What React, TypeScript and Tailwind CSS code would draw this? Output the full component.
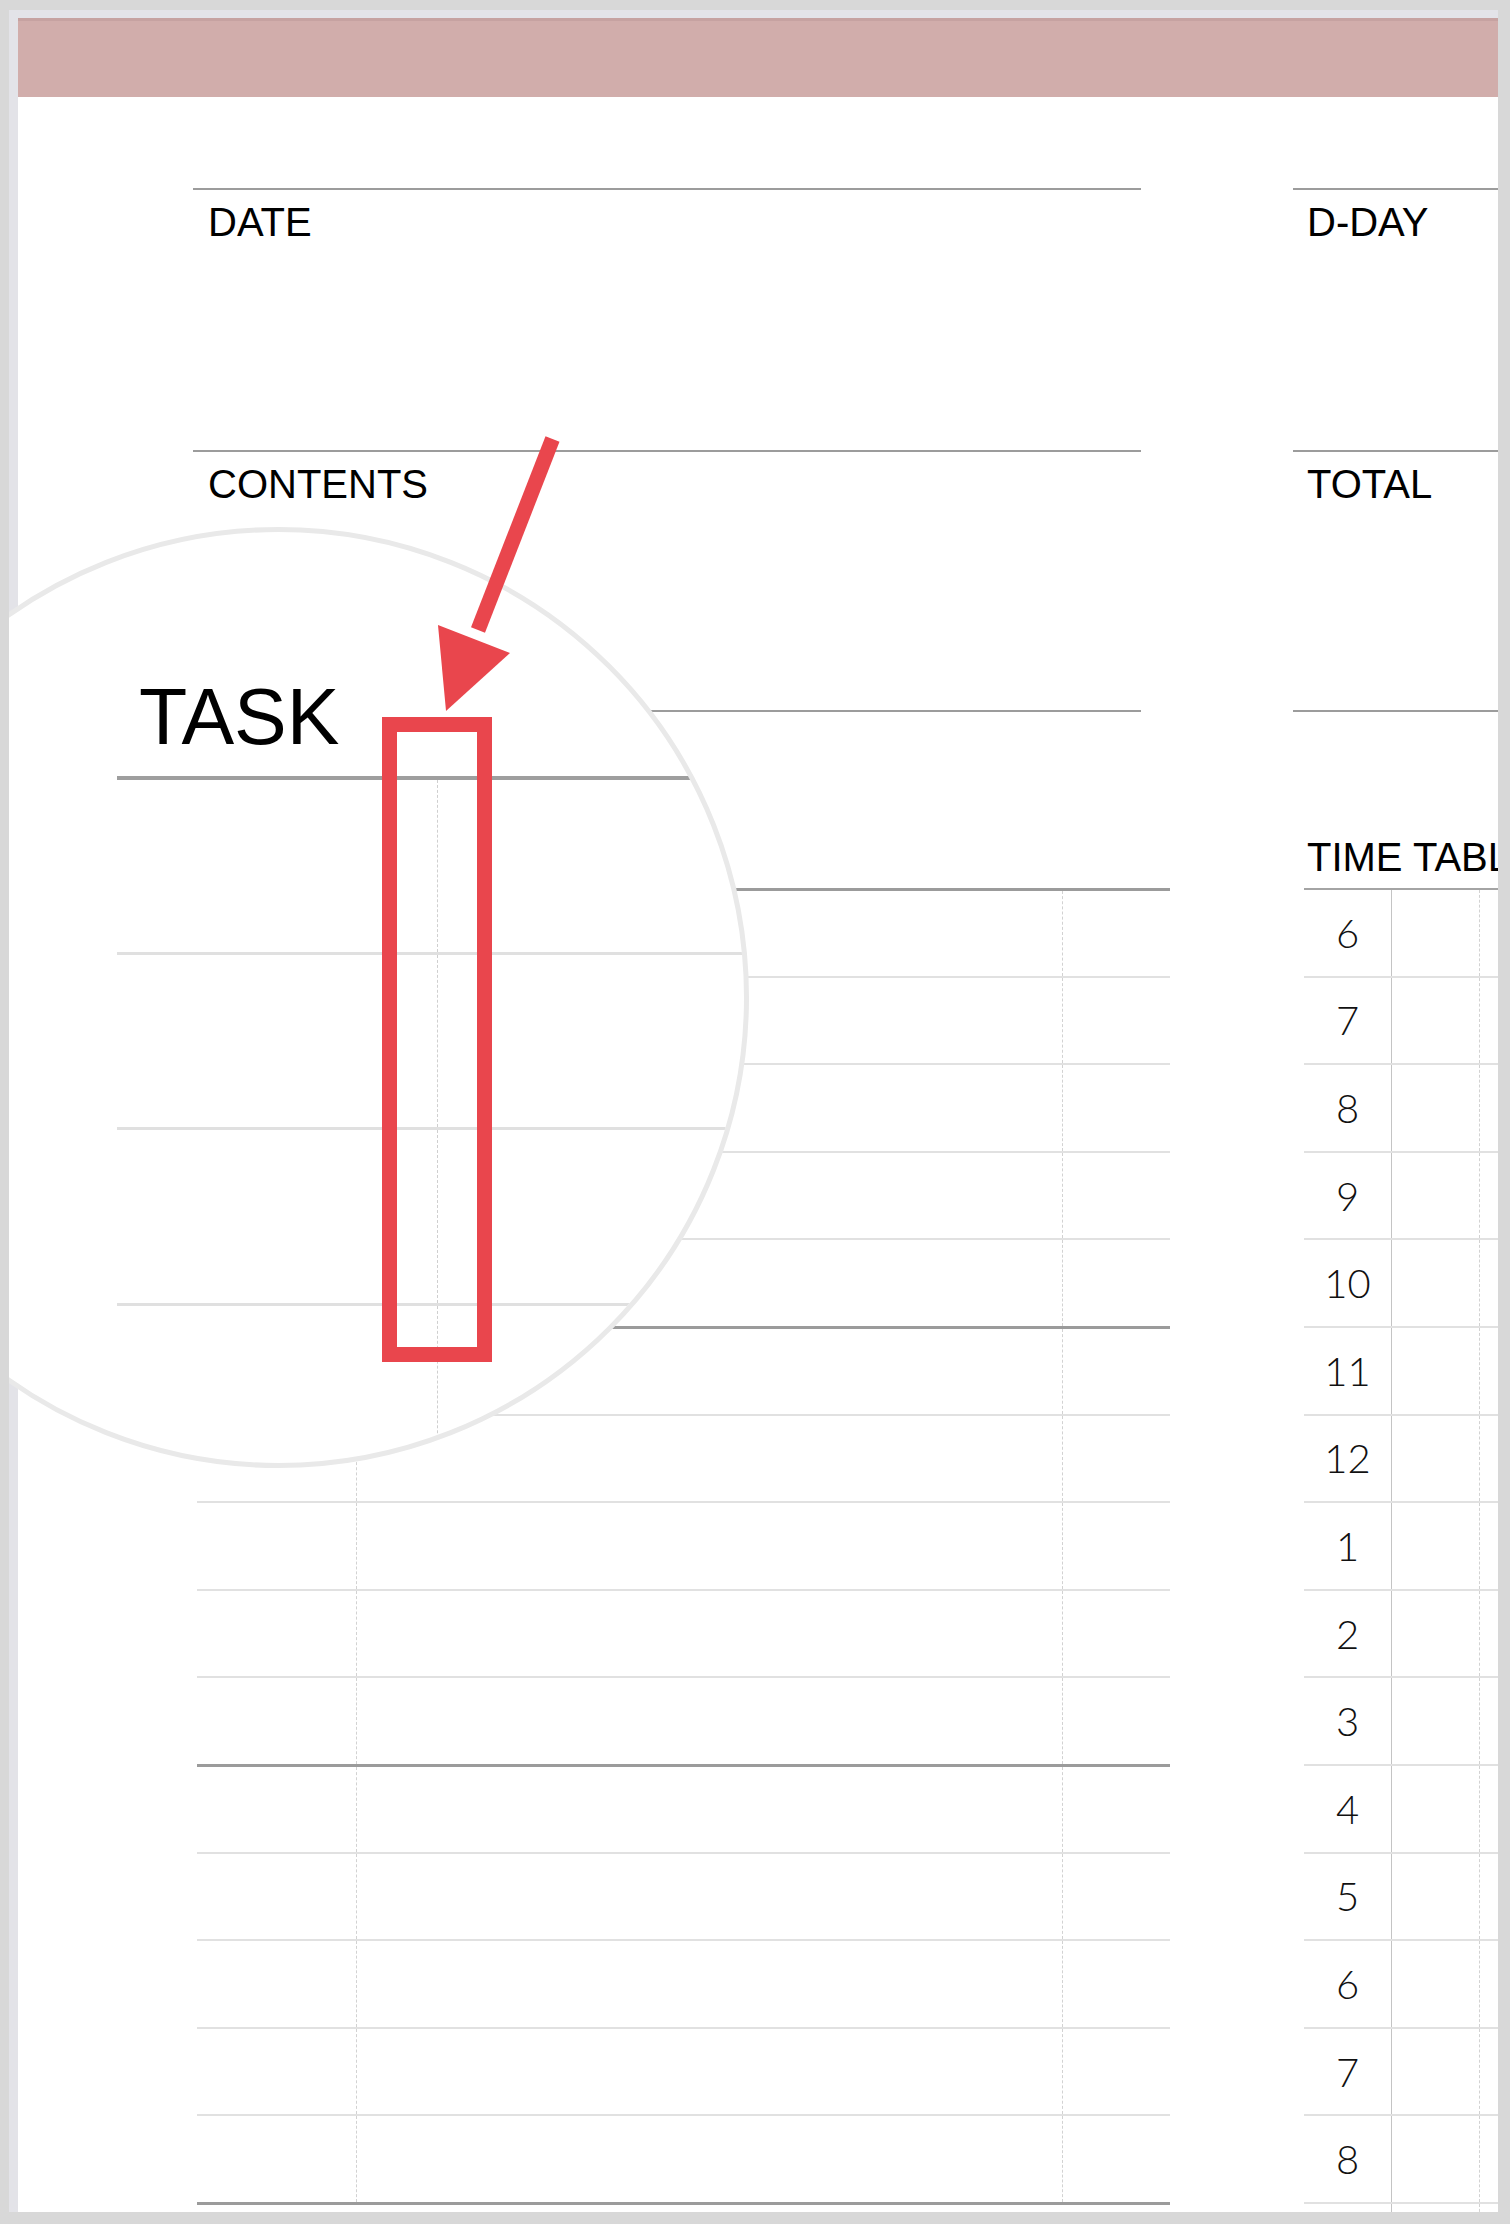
import React from "react";

const LABEL = "font-['Liberation_Sans',Arial,sans-serif] text-[40px] leading-none text-black";

function HeaderCol({ top, bottom, ml, w, pl }: { top: string; bottom: string; ml: string; w: string; pl: string }) {
  return (
    <div className={`${ml} ${w} shrink-0 flex flex-col`}>
      <div className={`h-[262px] border-t-2 border-[#9c9c9c] pt-[12px] ${pl}`}>
        <div className={LABEL}>{top}</div>
      </div>
      <div className={`h-[262px] border-t-2 border-b-2 border-[#9c9c9c] pt-[12px] ${pl}`}>
        <div className={LABEL}>{bottom}</div>
      </div>
    </div>
  );
}

const leftRows = Array.from({ length: 15 }, (_, i) => i);
const hours = ["6", "7", "8", "9", "10", "11", "12", "1", "2", "3", "4", "5", "6", "7", "8", ""];

export default function App() {
  return (
    <div className="relative w-[1510px] h-[2224px] bg-[#d8d8d8] pl-[9px] pt-[10px] overflow-hidden">
      <div className="relative w-[1489px] h-[2202px] bg-[#e3e3e8] pl-[9px] pt-[8px] overflow-hidden">
        {/* sheet */}
        <div className="w-[1480px] h-[2194px] bg-white overflow-hidden flex flex-col">
          <div className="h-[79px] shrink-0 bg-[#d1adab] border-t-[3px] border-[#c6a2a1]" />

          {/* header boxes */}
          <div className="mt-[91px] flex">
            <HeaderCol top="DATE" bottom="CONTENTS" ml="ml-[175px]" w="w-[948px]" pl="pl-[15px]" />
            <HeaderCol top="D-DAY" bottom="TOTAL" ml="ml-[152px]" w="w-[400px]" pl="pl-[14px]" />
          </div>

          {/* tables */}
          <div className="mt-[125px] flex">
            {/* task table */}
            <div className="ml-[179px] w-[973px] shrink-0 flex flex-col">
              <div className="h-[40px] pl-[11px] font-['Liberation_Sans',Arial,sans-serif] text-[39px] leading-none text-black">TASK</div>
              <div className="mt-[11px] border-b-[3px] border-[#9b9b9b]">
                {leftRows.map((i) => (
                  <div
                    key={i}
                    className={`h-[87.6px] flex ${i % 5 === 0 ? "border-t-[3px] border-[#9b9b9b]" : "border-t-2 border-[#e1e1e1]"}`}
                  >
                    <div className="w-[160px] border-r border-dashed border-[#d2d2d2]" />
                    <div className="w-[706px] border-r border-dashed border-[#d2d2d2]" />
                    <div className="flex-1" />
                  </div>
                ))}
              </div>
            </div>

            {/* time table */}
            <div className="ml-[134px] w-[420px] shrink-0 flex flex-col">
              <div className={`h-[40px] pl-[3px] whitespace-nowrap ${LABEL}`}>TIME TABLE</div>
              <div className="mt-[11px]">
                {hours.map((h, i) => (
                  <div
                    key={i}
                    className={`h-[87.6px] flex ${i === 0 ? "border-t-2 border-[#a4a4a4]" : "border-t-2 border-[#e1e1e1]"}`}
                  >
                    <div className="w-[88px] border-r border-[#c4c4c4] flex items-center justify-center font-['Lato',sans-serif] font-light text-[40px] leading-none text-[#111]">
                      {h}
                    </div>
                    <div className="w-[88px] border-r border-dashed border-[#d2d2d2]" />
                    <div className="flex-1" />
                  </div>
                ))}
              </div>
            </div>
          </div>
        </div>

        {/* magnifier */}
        <div className="absolute left-[-201px] top-[517px] w-[941px] h-[941px] rounded-full border-[5px] border-[#e9e9e9] bg-white overflow-hidden">
          <div className="pl-[304px] pt-[145px]">
            <div className="ml-[22px] h-[78px] font-['Liberation_Sans',Arial,sans-serif] text-[79px] leading-none text-black">TASK</div>
            <div className="mt-[21px] w-[1500px]">
              {[0, 1, 2, 3, 4].map((i) => (
                <div
                  key={i}
                  className={`h-[175.5px] flex ${i === 0 ? "border-t-4 border-[#9e9e9e]" : "border-t-[3px] border-[#e0e0e0]"}`}
                >
                  <div className="w-[321px] border-r border-dashed border-[#cfcfcf]" />
                  <div className="flex-1" />
                </div>
              ))}
            </div>
          </div>
        </div>
      </div>

      {/* annotation overlay */}
      <svg className="absolute left-0 top-0 pointer-events-none" width="1510" height="2224" viewBox="0 0 1510 2224">
        <rect x="389.5" y="724.5" width="95" height="630" fill="none" stroke="#e9464d" strokeWidth="15" />
        <line x1="552.5" y1="439" x2="478" y2="630" stroke="#e9464d" strokeWidth="15" strokeLinecap="butt" />
        <polygon points="438,625 510,653 446,711" fill="#e9464d" />
      </svg>
    </div>
  );
}
